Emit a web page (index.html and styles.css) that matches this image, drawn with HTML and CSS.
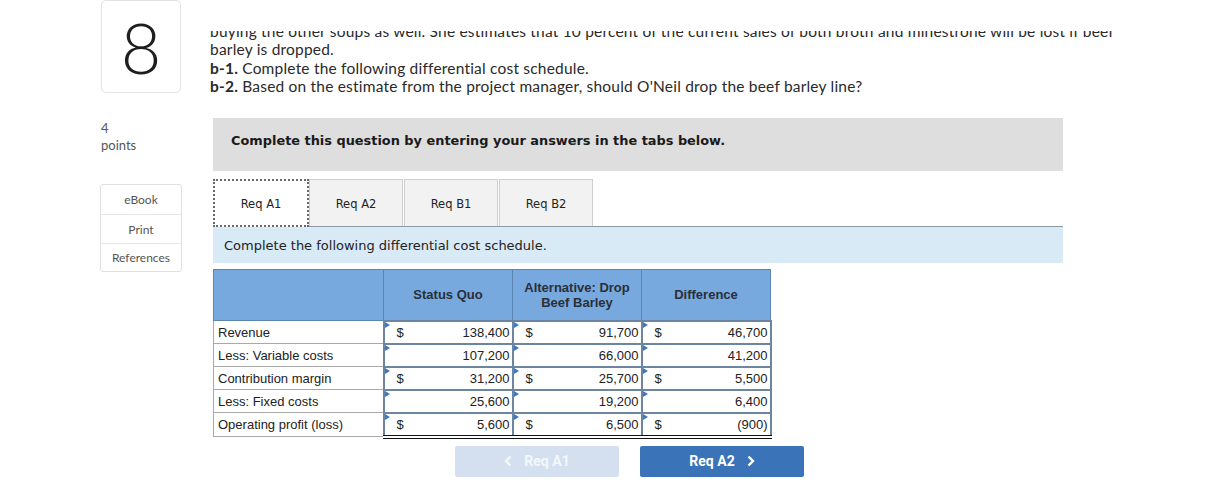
FILE: index.html
```html
<!DOCTYPE html>
<html>
<head>
<meta charset="utf-8">
<link rel="stylesheet" href="styles.css">
</head>
<body>
<div class="page">
  <aside class="side">
    <div class="qnum">8</div>
    <div class="pts">
      <div class="pn">4</div>
      <div>points</div>
    </div>
    <div class="tools">
      <div class="tool">eBook</div>
      <div class="tool">Print</div>
      <div class="tool">References</div>
    </div>
  </aside>
  <main class="main">
    <div class="prompt">
      <div class="clip"><p class="cut">buying the other soups as well. She estimates that 10 percent of the current sales of both broth and minestrone will be lost if beef</p></div>
      <p>barley is dropped.</p>
      <p><b>b-1.</b> Complete the following differential cost schedule.</p>
      <p><b>b-2.</b> Based on the estimate from the project manager, should O'Neil drop the beef barley line?</p>
    </div>
    <section class="panel">
      <div class="instr">Complete this question by entering your answers in the tabs below.</div>
      <div class="tabs">
        <div class="tab active">Req A1</div>
        <div class="tab">Req A2</div>
        <div class="tab">Req B1</div>
        <div class="tab">Req B2</div>
      </div>
      <div class="task">Complete the following differential cost schedule.</div>
      <table class="sched">
        <thead>
          <tr>
            <th class="lab"></th>
            <th>Status Quo</th>
            <th>Alternative: Drop<br>Beef Barley</th>
            <th>Difference</th>
          </tr>
        </thead>
        <tbody>
          <tr>
            <td class="lab">Revenue</td>
            <td class="v"><span class="cur">$</span><span class="num">138,400</span></td>
            <td class="v"><span class="cur">$</span><span class="num">91,700</span></td>
            <td class="v"><span class="cur">$</span><span class="num">46,700</span></td>
          </tr>
          <tr>
            <td class="lab">Less: Variable costs</td>
            <td class="v"><span class="cur"></span><span class="num">107,200</span></td>
            <td class="v"><span class="cur"></span><span class="num">66,000</span></td>
            <td class="v"><span class="cur"></span><span class="num">41,200</span></td>
          </tr>
          <tr class="sub">
            <td class="lab">Contribution margin</td>
            <td class="v"><span class="cur">$</span><span class="num">31,200</span></td>
            <td class="v"><span class="cur">$</span><span class="num">25,700</span></td>
            <td class="v"><span class="cur">$</span><span class="num">5,500</span></td>
          </tr>
          <tr>
            <td class="lab">Less: Fixed costs</td>
            <td class="v"><span class="cur"></span><span class="num">25,600</span></td>
            <td class="v"><span class="cur"></span><span class="num">19,200</span></td>
            <td class="v"><span class="cur"></span><span class="num">6,400</span></td>
          </tr>
          <tr class="sub last">
            <td class="lab">Operating profit (loss)</td>
            <td class="v"><span class="cur">$</span><span class="num">5,600</span></td>
            <td class="v"><span class="cur">$</span><span class="num">6,500</span></td>
            <td class="v"><span class="cur">$</span><span class="num">(900)</span></td>
          </tr>
        </tbody>
      </table>
      <div class="nav">
        <div class="btn prev">
          <svg class="chev" width="8" height="12" viewBox="0 0 8 12"><polyline points="6.5,1.5 2,6 6.5,10.5" fill="none" stroke="currentColor" stroke-width="2.4"/></svg>
          <span>Req A1</span>
        </div>
        <div class="btn next">
          <span>Req A2</span>
          <svg class="chev" width="8" height="12" viewBox="0 0 8 12"><polyline points="1.5,1.5 6,6 1.5,10.5" fill="none" stroke="currentColor" stroke-width="2.4"/></svg>
        </div>
      </div>
    </section>
  </main>
</div>
</body>
</html>
```

FILE: styles.css
```css
html, body {
  margin: 0;
  padding: 0;
  background: #fff;
}
body {
  font-family: Lato, "Open Sans", sans-serif;
  color: #222;
}
.page {
  display: flex;
  padding-left: 100px;
}
.side {
  width: 82px;
  flex: none;
}
.qnum {
  margin-left: 1px;
  width: 78px;
  height: 91px;
  border: 1px solid #e2e2e2;
  border-radius: 5px;
  display: flex;
  align-items: center;
  justify-content: center;
  font-family: Lato, sans-serif;
  font-weight: 300;
  font-size: 70px;
  color: #1e1e1e;
}
.pts {
  margin-top: 27px;
  padding-left: 1px;
  font-size: 13px;
  line-height: 17px;
  color: #555;
}
.tools {
  margin-top: 30px;
  width: 80px;
  border: 1px solid #e0e0e0;
  border-radius: 3px;
}
.tool {
  height: 28px;
  display: flex;
  align-items: center;
  justify-content: center;
  font-size: 12px;
  color: #555;
  border-bottom: 1px solid #e6e6e6;
}
.tool:first-child {
  height: 29px;
}
.tool:last-child {
  height: 27px;
  border-bottom: none;
}
.main {
  margin-left: 28px;
  flex: 1;
}
.prompt {
  padding-top: 22px;
  font-size: 15.5px;
  letter-spacing: 0.2px;
  line-height: 18.5px;
  color: #2a2a2a;
}
.prompt p {
  margin: 0;
  white-space: nowrap;
}
.prompt b {
  font-weight: 700;
}
.clip {
  height: 9px;
  margin-top: 9px;
  overflow: hidden;
}
.cut {
  margin-top: -9px !important;
}
.panel {
  margin-left: 3px;
  width: 850px;
  margin-top: 22px;
}
.instr {
  height: 53px;
  background: #dedede;
  box-sizing: border-box;
  padding: 15px 0 0 18px;
  font-family: "DejaVu Sans", Verdana, sans-serif;
  font-weight: bold;
  font-size: 12.9px;
  color: #1a1a1a;
}
.tabs {
  margin-top: 8px;
  display: flex;
  height: 47px;
}
.tab {
  width: 94px;
  box-sizing: border-box;
  border: 1px solid #cfcfcf;
  border-bottom: none;
  background: #f2f2f2;
  display: flex;
  align-items: center;
  justify-content: center;
  padding-top: 2px;
  font-family: "DejaVu Sans", Verdana, sans-serif;
  font-size: 11.5px;
  color: #222;
  margin-right: 1px;
}
.tab.active {
  background: #fff;
  border: 2px dotted #6a6a6a;
  width: 96px;
  height: 48px;
  margin-right: 0;
  position: relative;
  z-index: 1;
}
.task {
  height: 37px;
  box-sizing: border-box;
  background: #d9eaf7;
  border-top: 1px solid #8c9aa6;
  padding: 11px 0 0 11px;
  font-family: "DejaVu Sans", Verdana, sans-serif;
  font-size: 13px;
  color: #222;
}
.sched {
  margin-top: 6px;
  border-collapse: collapse;
  font-family: "Liberation Sans", Arial, sans-serif;
  font-size: 13px;
  color: #222;
}
.sched th {
  height: 50px;
  background: #77a9de;
  border: 1px solid #5c86b2;
  font-weight: bold;
  font-size: 13px;
  line-height: 15px;
  color: #2b2f38;
  width: 128px;
  padding: 0;
}
.sched th.lab {
  width: 169px;
}
.sched td {
  height: 21px;
  padding: 0;
}
.sched td.lab {
  border: 1px solid #a9a9a9;
  padding-left: 4px;
  border-right: none;
}
.sched td.v {
  border: 2px solid #6c85a0;
  position: relative;
  background: #fff;
}
.sched td.v::before {
  content: "";
  position: absolute;
  left: 0;
  top: 0;
  border-left: 5px solid #3e78c2;
  border-top: 3px solid transparent;
  border-bottom: 3px solid transparent;
}
.cur {
  display: inline-block;
  width: 30px;
  padding-left: 12px;
  box-sizing: border-box;
}
.num {
  float: right;
  padding-right: 2px;
}
.sched tr.sub td.v {
  border-top: 2px solid #1d2733;
}
.sched tr.last td.v {
  border-bottom: 4px double #111;
}
.nav {
  margin-top: 7px;
  display: flex;
  gap: 21px;
  padding-left: 242px;
}
.btn {
  width: 164px;
  height: 31px;
  border-radius: 2px;
  display: flex;
  align-items: center;
  justify-content: center;
  gap: 12px;
  font-family: Roboto, sans-serif;
  font-weight: bold;
  font-size: 14px;
  color: #fff;
}
.prev {
  background: #d4e0f0;
  color: #f4f7fb;
}
.next {
  background: #3b73b9;
}
```
